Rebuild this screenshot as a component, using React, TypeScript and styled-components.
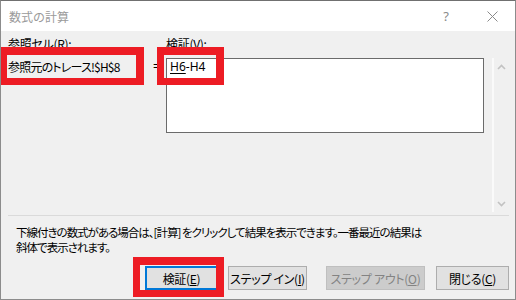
import React from 'react';
import styled, { createGlobalStyle } from 'styled-components';

const GlobalStyle = createGlobalStyle`
  html, body {
    margin: 0;
    padding: 0;
    background: #ffffff;
  }
  body {
    font-family: "Noto Sans", "Noto Sans CJK JP", sans-serif;
    font-size: 12px;
    color: #000;
  }
`;

const Window = styled.div`
  position: relative;
  width: 516px;
  height: 300px;
  box-sizing: border-box;
  border: 1px solid #8c8c8c;
  border-top-color: #707070;
  display: flex;
  flex-direction: column;
  background: #f0f0f0;
  overflow: hidden;
`;

const TitleBar = styled.div`
  height: 30px;
  flex: none;
  background: #ffffff;
  display: flex;
  align-items: center;
  padding-left: 8px;
`;

const Title = styled.span`
  flex: 1;
  color: #9a9a9a;
  font-family: "Noto Sans CJK JP", sans-serif;
  font-size: 12px;
`;

const TitleButton = styled.div`
  width: 46px;
  height: 30px;
  display: flex;
  align-items: center;
  justify-content: center;
  color: #8a8a8a;
  font-size: 13px;
`;

const Body = styled.div`
  flex: 1;
  display: flex;
  flex-direction: column;
  padding: 5px 6px 9px 7px;
`;

const TopSection = styled.div`
  display: flex;
  height: 176px;
`;

const FieldGrid = styled.div`
  display: grid;
  grid-template-columns: 140px 18px 318px;
  grid-template-rows: 22px auto;
  align-content: start;
`;

const Label = styled.div`
  line-height: 16px;
  font-family: "Noto Sans CJK JP", sans-serif;
  font-feature-settings: "palt";
  letter-spacing: -0.3px;
  white-space: nowrap;
`;

const RefText = styled.div`
  padding-top: 1px;
  line-height: 16px;
  font-family: "Noto Sans CJK JP", sans-serif;
  font-feature-settings: "palt";
  letter-spacing: -0.8px;
  white-space: nowrap;
`;

const Equals = styled.div`
  padding: 1px 0 0 5px;
  line-height: 16px;
`;

const EditBox = styled.div`
  height: 75px;
  box-sizing: border-box;
  border: 1px solid #6b6b6b;
  background: #ffffff;
  padding: 0 3px;
  line-height: 16px;
  white-space: nowrap;
`;

const Formula = styled.span`
  u {
    text-decoration-thickness: 1px;
    text-underline-offset: 2px;
  }
`;

const ScrollTrack = styled.div`
  width: 17px;
  margin: 22px 0 0 8px;
  box-sizing: border-box;
  border-left: 2px solid #fafafa;
  display: flex;
  flex-direction: column;
  justify-content: space-between;
  align-items: center;
  padding: 6px 0 5px;
`;

const Separator = styled.div`
  height: 1px;
  margin: 3px 0 0 0;
  background: #dadada;
`;

const Description = styled.p`
  margin: 9px 0 0 8px;
  line-height: 15px;
  font-family: "Noto Sans CJK JP", sans-serif;
  font-feature-settings: "palt";
  font-size: 11.5px;
  letter-spacing: -1px;
  white-space: nowrap;
`;

const ButtonRow = styled.div`
  margin-top: auto;
  display: flex;
  justify-content: flex-end;
`;

const Button = styled.div<{ $w: number; $gap: number; $default?: boolean; $disabled?: boolean }>`
  width: ${(p) => p.$w}px;
  height: 24px;
  margin-left: ${(p) => p.$gap}px;
  box-sizing: border-box;
  display: flex;
  align-items: center;
  justify-content: center;
  background: ${(p) => (p.$disabled ? '#cccccc' : '#e1e1e1')};
  border: ${(p) => (p.$default ? '2px solid #0078d7' : p.$disabled ? '1px solid #bfbfbf' : '1px solid #adadad')};
  color: ${(p) => (p.$disabled ? '#838383' : '#000')};
  font-family: "Noto Sans CJK JP", sans-serif;
  font-feature-settings: "palt";
  letter-spacing: -0.3px;
  font-size: 12px;
  white-space: nowrap;
`;

const Highlight = styled.div<{ $x: number; $y: number; $w: number; $h: number }>`
  position: absolute;
  left: ${(p) => p.$x}px;
  top: ${(p) => p.$y}px;
  width: ${(p) => p.$w}px;
  height: ${(p) => p.$h}px;
  box-sizing: border-box;
  border: 8px solid #ed1c24;
  border-width: 8px 8px 7px 7px;
  pointer-events: none;
`;

const Chevron = ({ up }: { up?: boolean }) => (
  <svg width="9" height="6" viewBox="0 0 9 6">
    <path
      d={up ? 'M1 5 L4.5 1.5 L8 5' : 'M1 1 L4.5 4.5 L8 1'}
      fill="none"
      stroke="#c2c2c2"
      strokeWidth="1.6"
    />
  </svg>
);

const CloseGlyph = () => (
  <svg width="11" height="11" viewBox="0 0 11 11">
    <path d="M0.5 0.5 L10.5 10.5 M10.5 0.5 L0.5 10.5" stroke="#8a8a8a" strokeWidth="1" />
  </svg>
);

export default function App() {
  return (
    <>
      <GlobalStyle />
      <Window>
        <TitleBar>
          <Title>数式の計算</Title>
          <TitleButton>?</TitleButton>
          <TitleButton>
            <CloseGlyph />
          </TitleButton>
        </TitleBar>
        <Body>
          <TopSection>
            <FieldGrid>
              <Label>
                参照セル(<u>R</u>):
              </Label>
              <div />
              <Label>
                検証(<u>V</u>):
              </Label>
              <RefText>参照元のトレース!$H$8</RefText>
              <Equals>=</Equals>
              <EditBox>
                <Formula>
                  <u>H6</u>-H4
                </Formula>
              </EditBox>
            </FieldGrid>
            <ScrollTrack>
              <Chevron up />
              <Chevron />
            </ScrollTrack>
          </TopSection>
          <Separator />
          <Description>
            下線付きの数式がある場合は、[計算] をクリックして結果を表示できます。一番最近の結果は
            <br />
            斜体で表示されます。
          </Description>
          <ButtonRow>
            <Button $w={73} $gap={0} $default>
              検証(<u>E</u>)
            </Button>
            <Button $w={79} $gap={10}>
              ステップ イン(<u>I</u>)
            </Button>
            <Button $w={99} $gap={19} $disabled>
              ステップ アウト(<u>O</u>)
            </Button>
            <Button $w={73} $gap={11}>
              閉じる(<u>C</u>)
            </Button>
          </ButtonRow>
        </Body>
        <Highlight $x={-1} $y={46} $w={144} $h={38} />
        <Highlight $x={156} $y={46} $w={67} $h={38} />
        <Highlight $x={132} $y={256} $w={91} $h={40} />
      </Window>
    </>
  );
}
